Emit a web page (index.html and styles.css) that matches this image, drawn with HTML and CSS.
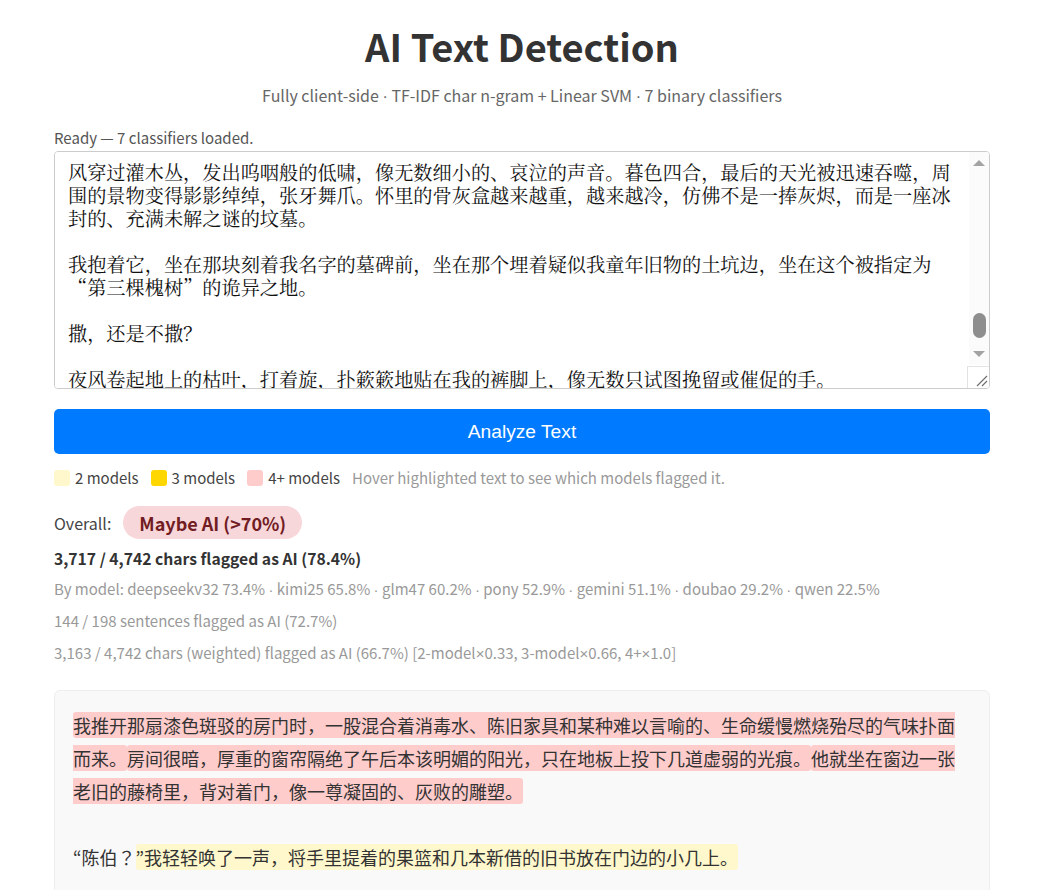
FILE: index.html
```html
<!DOCTYPE html>
<html lang="en">
<head>
<meta charset="utf-8">
<title>AI Text Detection</title>
<link rel="stylesheet" href="styles.css">
</head>
<body>
<div class="container">
  <h1 class="title">AI Text Detection</h1>
  <p class="subtitle">Fully client-side <span class="sym">·</span> TF-IDF char n-gram + Linear SVM <span class="sym">·</span> 7 binary classifiers</p>
  <div class="status">Ready — 7 classifiers loaded.</div>
  <div class="input-wrap">
    <textarea class="input" id="input" lang="zh-CN">我回到村子的时候，天已经快黑了。

村口的老槐树还在，只是比记忆中更加苍老。

树皮皲裂，像一张布满皱纹的脸，沉默地注视着我。

我抱着那只骨灰盒，沿着泥泞的小路往山上走。

路边的野草长得很高，几乎没过了膝盖。

远处传来几声狗吠，很快又被寂静吞没。

母亲临终前说，一定要把父亲带回这里。

她说，这里是他出生的地方，也该是他安息的地方。

可我从未听父亲提起过这个村子。

他总是沉默寡言，仿佛有什么秘密压在心底。

我在村里打听了很久，才找到那片荒废的坟地。

一个老人告诉我，要找第三棵槐树。

他说完就转身走了，拐杖敲在石板上，笃笃作响。

我不明白他的意思，只好沿着山坡一棵一棵地数。

第一棵槐树已经枯死，只剩下半截焦黑的树桩。

第二棵槐树下堆满了碎石，像是有人刻意掩埋过什么。

第三棵槐树长在山坳里，枝叶茂密，遮天蔽日。

树下有一块墓碑，碑上的字迹已经模糊不清。

我蹲下身，用手拂去碑面上的青苔和尘土。

那上面刻着的，竟然是我的名字。

我愣住了，心脏仿佛被一只冰冷的手攥紧。

碑上的生辰，和我的一模一样。

我不知道自己在那里站了多久。

直到一阵冷风吹过，我才回过神来。

墓碑旁边有一个小小的土坑，像是刚被人挖开。

坑里散落着几样东西：一只拨浪鼓，一双虎头鞋。

还有一张发黄的照片，照片上是一个陌生的孩子。

我捡起照片，翻过来，背面写着一行小字。

“他本该留在这里。”

天色越来越暗，山林里的声音也越来越多。

风穿过灌木丛，发出呜咽般的低啸，像无数细小的、哀泣的声音。暮色四合，最后的天光被迅速吞噬，周围的景物变得影影绰绰，张牙舞爪。怀里的骨灰盒越来越重，越来越冷，仿佛不是一捧灰烬，而是一座冰封的、充满未解之谜的坟墓。

我抱着它，坐在那块刻着我名字的墓碑前，坐在那个埋着疑似我童年旧物的土坑边，坐在这个被指定为“第三棵槐树”的诡异之地。

撒，还是不撒？

夜风卷起地上的枯叶，打着旋，扑簌簌地贴在我的裤脚上，像无数只试图挽留或催促的手。

我想起母亲的话，想起父亲沉默的背影。</textarea>
    <div class="fake-scroll" aria-hidden="true">
      <span class="sb-arrow"><span class="tri tri-up"></span></span>
      <span class="sb-track"><span class="sb-thumb"></span></span>
      <span class="sb-arrow"><span class="tri tri-down"></span></span>
    </div>
    <span class="fake-resizer" aria-hidden="true"><svg width="22" height="22" viewBox="0 0 22 22"><path d="M20 10L10 20M20 15L15 20" stroke="#6f6f6f" stroke-width="1.2" fill="none"/></svg></span>
  </div>
  <button class="analyze" type="button">Analyze Text</button>
  <div class="legend">
    <span class="legend-item"><span class="swatch swatch-2"></span>2 models</span>
    <span class="legend-item"><span class="swatch swatch-3"></span>3 models</span>
    <span class="legend-item"><span class="swatch swatch-4"></span>4+ models</span>
    <span class="legend-hint">Hover highlighted text to see which models flagged it.</span>
  </div>
  <div class="overall">
    <span class="overall-label">Overall:</span>
    <span class="badge">Maybe AI (&gt;70%)</span>
  </div>
  <div class="stat-main">3,717 / 4,742 chars flagged as AI (78.4%)</div>
  <div class="stat stat-models">By model: deepseekv32 73.4% <span class="sym">·</span> kimi25 65.8% <span class="sym">·</span> glm47 60.2% <span class="sym">·</span> pony 52.9% <span class="sym">·</span> gemini 51.1% <span class="sym">·</span> doubao 29.2% <span class="sym">·</span> qwen 22.5%</div>
  <div class="stat">144 / 198 sentences flagged as AI (72.7%)</div>
  <div class="stat">3,163 / 4,742 chars (weighted) flagged as AI (66.7%) [2-model<span class="sym">×</span>0.33, 3-model<span class="sym">×</span>0.66, 4+<span class="sym">×</span>1.0]</div>
  <div class="result"><span class="hl hl-4">我推开那扇漆色斑驳的房门时，一股混合着消毒水、陈旧家具和某种难以言喻的、生命缓慢燃烧殆尽的气味扑面而来。</span><span class="hl hl-4">房间很暗，厚重的窗帘隔绝了午后本该明媚的阳光，只在地板上投下几道虚弱的光痕。</span><span class="hl hl-4">他就坐在窗边一张老旧的藤椅里，背对着门，像一尊凝固的、灰败的雕塑。</span>

“陈伯？<span class="hl hl-2">”我轻轻唤了一声，将手里提着的果篮和几本新借的旧书放在门边的小几上。</span>

<span class="hl hl-3">他没有回头，只是肩膀微微动了一下，像是从很深的梦里被惊醒。</span>窗台上的那盆吊兰早已枯黄，叶子卷曲着垂下来。</div>
</div>
<script src="script.js"></script>
</body>
</html>
```

FILE: styles.css
```css
* {
  box-sizing: border-box;
}

body {
  margin: 0;
  background: #ffffff;
  color: #333333;
  font-family: "Noto Sans CJK JP", "Noto Sans CJK SC", sans-serif;
}

.container {
  width: 936px;
  margin-left: calc(50% - 466.5px);
  padding: 18px 0 40px;
}

.sym {
  font-family: "Liberation Sans", Arial, sans-serif;
}

.title {
  margin: 0;
  text-align: center;
  font-size: 38px;
  font-weight: 700;
  color: #333333;
}

.subtitle {
  margin: 10px 0 20px;
  text-align: center;
  font-size: 16px;
  color: #666666;
}

.status {
  font-size: 15px;
  color: #555555;
  margin-bottom: 3px;
}

.input-wrap {
  position: relative;
}

.input {
  display: block;
  width: 100%;
  height: 238px;
  padding: 12px 32px 12px 13px;
  border: 1px solid #cccccc;
  border-radius: 4px;
  font-family: "Noto Serif CJK SC", "Liberation Serif", serif;
  font-size: 19.2px;
  line-height: 23px;
  color: #111111;
  background: #ffffff;
  resize: none;
}

.fake-scroll {
  position: absolute;
  top: 1px;
  right: 1px;
  bottom: 24px;
  width: 20px;
  display: flex;
  flex-direction: column;
  background: #fbfbfb;
  border-top-right-radius: 3px;
}

.sb-arrow {
  height: 22px;
  display: flex;
  align-items: center;
  justify-content: center;
  flex-shrink: 0;
}

.tri {
  width: 0;
  height: 0;
  border-left: 6.5px solid transparent;
  border-right: 6.5px solid transparent;
}

.tri-up {
  border-bottom: 6px solid #a3a3a3;
}

.tri-down {
  border-top: 6px solid #a3a3a3;
}

.sb-track {
  flex: 1;
  display: flex;
  justify-content: center;
}

.sb-thumb {
  width: 13px;
  height: 25px;
  margin-top: 139px;
  border-radius: 7px;
  background: #8e8e8e;
}

.fake-resizer {
  position: absolute;
  right: 1px;
  bottom: 1px;
  width: 22px;
  height: 22px;
  background: #ffffff;
  border-top: 1px solid #e2e2e2;
  border-left: 1px solid #e2e2e2;
  border-bottom-right-radius: 3px;
}

.fake-resizer svg {
  display: block;
  position: absolute;
  right: 0;
  bottom: 0;
}

.analyze {
  display: block;
  width: 100%;
  height: 45px;
  margin-top: 20px;
  border: none;
  border-radius: 5px;
  background: #007bff;
  color: #ffffff;
  font-family: "Liberation Sans", Arial, sans-serif;
  font-size: 19.2px;
  cursor: pointer;
}

.legend {
  display: flex;
  align-items: center;
  margin-top: 13px;
  font-size: 15px;
  color: #444444;
}

.legend-item {
  display: inline-flex;
  align-items: center;
  margin-right: 12px;
}

.swatch {
  display: inline-block;
  width: 16px;
  height: 16px;
  border-radius: 3px;
  margin-right: 5px;
}

.swatch-2 { background: #fff8cc; }
.swatch-3 { background: #ffd700; }
.swatch-4 { background: #ffcccc; }

.legend-hint {
  color: #999999;
}

.overall {
  display: flex;
  align-items: center;
  margin-top: 18px;
}

.overall-label {
  font-size: 16px;
  color: #444444;
  margin-right: 12px;
}

.badge {
  display: inline-block;
  padding: 3.5px 16px;
  border-radius: 17px;
  background: #f8d7da;
  color: #721c24;
  font-size: 18px;
  font-weight: 700;
}

.stat-main {
  margin-top: 8px;
  font-size: 15.7px;
  font-weight: 600;
  color: #333333;
}

.stat {
  margin-top: 11px;
  font-size: 15px;
  color: #999999;
}

.stat-models {
  margin-top: 8px;
}

.result {
  margin-top: 27px;
  padding: 18px;
  background: #f9f9f9;
  border: 1px solid #eeeeee;
  border-radius: 6px;
  font-size: 18px;
  line-height: 33px;
  color: #333333;
  white-space: pre-wrap;
}

.hl {
  border-radius: 3px;
}

.hl-2 { background: #fff8cc; }
.hl-3 { background: #ffd700; }
.hl-4 { background: #ffcccc; }
```

FILE: script.js
```js
var input = document.getElementById('input');
input.scrollTop = 60 * 23 + 4;
```
